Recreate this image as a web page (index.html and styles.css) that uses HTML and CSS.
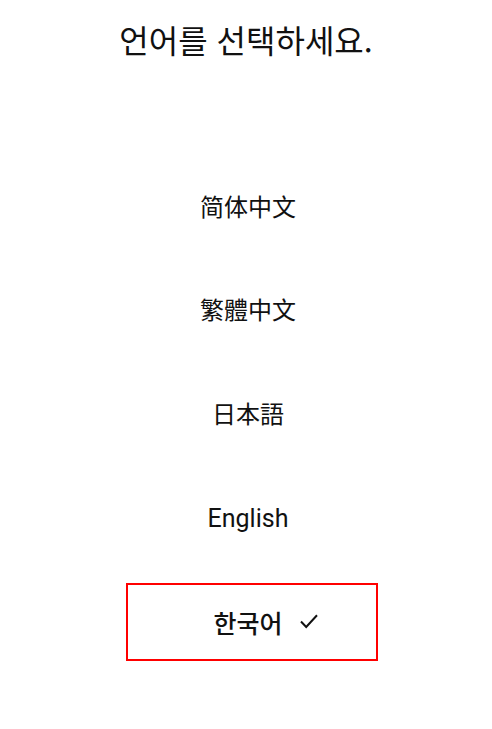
FILE: index.html
```html
<!DOCTYPE html>
<html lang="ko">
<head>
    <meta charset="UTF-8">
    <meta name="viewport" content="width=device-width, initial-scale=1.0">
    <title>언어 선택</title>
    <link rel="stylesheet" href="styles.css">
</head>
<body>
    <div class="container">
        <h1 class="title">언어를 선택하세요.</h1>

        <ul class="lang-list">
            <li class="lang-item cjk" lang="zh-Hans">简体中文</li>
            <li class="lang-item cjk" lang="zh-Hant">繁體中文</li>
            <li class="lang-item cjk" lang="ja">日本語</li>
            <li class="lang-item" lang="en">English</li>
            <li class="lang-item selected" lang="ko">
                한국어
                <svg class="check" width="18" height="15" viewBox="0 0 18 15">
                    <path d="M1 7.5 L6.2 13 L17 1.2" fill="none" stroke="#111" stroke-width="2"/>
                </svg>
            </li>
        </ul>
    </div>
</body>
</html>
```

FILE: styles.css
```css
body {
    margin: 0;
    background-color: #ffffff;
    color: #111;
    font-family: Roboto, "Noto Sans CJK KR", sans-serif;
}
.container {
    width: 492px;
    padding-top: 19px;
}
.title {
    margin: 0;
    text-align: center;
    font-family: "Noto Sans CJK KR", sans-serif;
    font-weight: 400;
    font-size: 32px;
    line-height: 40px;
}
.lang-list {
    list-style: none;
    margin: 110px 0 0 126px;
    padding: 0;
    width: 252px;
    display: flex;
    flex-direction: column;
    gap: 25.5px;
}
.lang-item {
    position: relative;
    box-sizing: border-box;
    height: 78px;
    border: 2px solid transparent;
    padding-right: 8px;
    display: flex;
    justify-content: center;
    align-items: center;
    font-size: 25px;
}
.lang-item.cjk {
    font-size: 24px;
    padding-bottom: 6px;
}
.lang-item[lang="zh-Hans"] {
    font-family: "Noto Sans CJK SC", sans-serif;
}
.lang-item[lang="zh-Hant"] {
    font-family: "Noto Sans CJK TC", sans-serif;
}
.lang-item[lang="ja"] {
    font-family: "Noto Sans CJK JP", sans-serif;
}
.lang-item[lang="en"] {
    font-family: Roboto, sans-serif;
}
.lang-item.selected {
    border-color: #ff0000;
    font-family: "Noto Sans CJK KR", sans-serif;
    font-size: 25px;
    font-weight: 500;
}
.check {
    position: absolute;
    left: 172px;
    top: 29px;
}
```
